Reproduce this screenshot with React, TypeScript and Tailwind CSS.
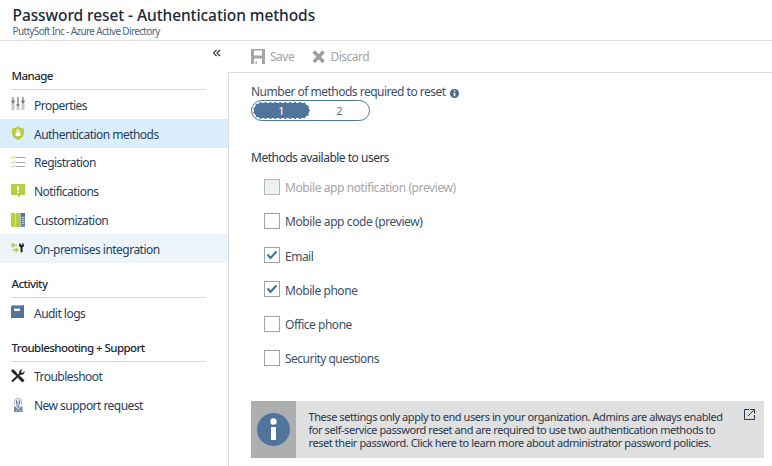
import React from "react";

const svg = { width: 14, height: 14, viewBox: "0 0 14 14" };

const Sliders = () => (
  <svg {...svg}>
    <path d="M1 0h2v13H1zM6 0h2v13H6zM11 0h2v13h-2z" fill="#a9acb0" />
    <path d="M0 7h4v6H0zM5 10h4v3H5zM10 7h4v6h-4z" fill="#dfe2e5" />
    <path d="M1 7h2v6H1zM6 10h2v3H6zM11 7h2v6h-2z" fill="#c6cacd" />
    <path d="M.5 3h3v3H.5zM5.500 7h3v2h-3zM10.500 3h3v3h-3z" fill="#83888f" />
  </svg>
);
const Shield = () => (
  <svg {...svg}>
    <path d="M1 2.500C4 2.500 5.500 1.200 7 0 8.500 1.200 10 2.500 13 2.500V7c0 3.500-2.500 5.500-6 7C3.500 12.500 1 10.500 1 7z" fill="#b5cf3f" />
    <path d="M4.700 6.200h4.600V10H4.700z" fill="#fff" />
    <path d="M5.700 6.500V5.200a1.300 1.300 0 0 1 2.600 0v1.300" fill="none" stroke="#fff" />
  </svg>
);
const Checklist = () => (
  <svg {...svg}>
    <path d="M4.500 2.500H14M4.500 7.500H14M4.500 11.500H14" stroke="#a5a8aa" />
    <path d="M.3 2.300l1.200 1.200L4 1M.3 7l1.200 1.200L4 5.700M.3 11.300l1.200 1.200L4 10" fill="none" stroke="#b5cf3f" />
  </svg>
);
const Bubble = () => (
  <svg {...svg}>
    <path d="M0 0h14v11H9.500L8 13.500 6 11H0z" fill="#b5cf3f" />
    <path d="M6 2h2v4.500H6zM6 7.700h2v1.600H6z" fill="#fff" />
  </svg>
);
const Columns = () => (
  <svg {...svg}>
    <path d="M0 0h4v14H0zM5 0h4v14H5z" fill="#b5cf3f" />
    <path d="M4 1h1v13H4z" fill="#d3dba8" />
    <path d="M9 0h1v14H9z" fill="#b8bdc3" />
    <path d="M10 0h4v14h-4z" fill="#7189a8" />
    <path d="M10 0h4v3h-4z" fill="#50759d" />
    <path d="M11 4.500h2M11 6.500h2M11 8.500h2M11 10.500h2" stroke="#b9c8d8" />
  </svg>
);
const Premises = () => (
  <svg {...svg}>
    <path d="M.5 4.300H6M2.800 2L.7 4.300l2.100 2.200M1.500 9H7M4.700 6.700L6.900 9l-2.200 2.300" fill="none" stroke="#b5cf3f" strokeWidth="1.400" />
    <path d="M8 4.300c0-1.200.8-2 1.700-2.200V4h1.600V2.100c1 .2 1.700 1 1.700 2.200 0 1-.6 1.700-1.500 2v5h-2v-5c-.9-.3-1.500-1-1.500-2z" fill="#1f2022" />
  </svg>
);
const Book = () => (
  <svg {...svg}>
    <path d="M1.500 0H13v13H0V1.500z" fill="#50759d" />
    <path d="M1.500.5H12" stroke="#9aafc8" />
    <path d="M3 3.500h6V6H3z" fill="#fff" />
  </svg>
);
const Tools = () => (
  <svg {...svg}>
    <path d="M1 1l4 4" stroke="#1f2022" strokeWidth="2.800" />
    <path d="M4.500 4.500l4 4M1 12.500L9.500 4.500" stroke="#1f2022" strokeWidth="1.900" />
    <path d="M8.300 8.300l4.200 4.200" stroke="#1f2022" strokeWidth="3" />
    <path d="M11.800.5L10 2.300l.3 1.300 1.300.3L13.500 2c.5 2.200-1.200 4-3.500 3.700L8.200 4C7.800 1.800 9.500.1 11.800.5z" fill="#1f2022" />
  </svg>
);
const Support = () => (
  <svg {...svg}>
    <path d="M3.500 6.500V4a3.500 3.500 0 0 1 7 0v2.500" fill="none" stroke="#9aa7b5" />
    <path d="M5 2.500h4v4.200H5z" fill="#c3d2e0" />
    <path d="M5.500 2.500v3.500M8.500 2.500v3.500M5.500 7.300h3" stroke="#50759d" />
    <path d="M3 8.500h8.500V14H3z" fill="#6a88a8" />
    <path d="M4.500 8.500L7.200 11 10 8.500M5 12.500h1M8.500 12.500h1" fill="none" stroke="#e8eef4" />
  </svg>
);

type Item = { icon: React.ReactNode; label: string; row?: string };

const manage: Item[] = [
  { icon: <Sliders />, label: "Properties" },
  { icon: <Shield />, label: "Authentication methods", row: "bg-[#daeefd]" },
  { icon: <Checklist />, label: "Registration" },
  { icon: <Bubble />, label: "Notifications" },
  { icon: <Columns />, label: "Customization" },
  { icon: <Premises />, label: "On-premises integration", row: "bg-[#edf5fa]" },
];
const activity: Item[] = [{ icon: <Book />, label: "Audit logs" }];
const support: Item[] = [
  { icon: <Tools />, label: "Troubleshoot" },
  { icon: <Support />, label: "New support request" },
];

function Section({ title, items }: { title: string; items: Item[] }) {
  return (
    <section>
      <h2 className="mr-[22px] ml-[11px] flex h-[27px] items-center border-b border-[#d5d9dd] pl-[0.5px] text-[11.5px] font-medium tracking-[-0.55px] text-[#1b2733]">
        {title}
      </h2>
      <ul>
        {items.map((it) => (
          <li key={it.label} className={`flex h-[28.8px] items-center pl-[11px] ${it.row ?? ""}`}>
            <span className="w-[23px] shrink-0">{it.icon}</span>
            <span className="pt-[2.8px] text-[12px] tracking-[-0.53px] text-[#27405c]">{it.label}</span>
          </li>
        ))}
      </ul>
    </section>
  );
}

const methods = [
  { label: "Mobile app notification (preview)", disabled: true, cls: "tracking-[-0.41px]" },
  { label: "Mobile app code (preview)", cls: "tracking-[-0.4px]" },
  { label: "Email", checked: true, cls: "tracking-[-0.5px]" },
  { label: "Mobile phone", checked: true, cls: "tracking-[-0.45px]" },
  { label: "Office phone", cls: "tracking-[-0.48px]" },
  { label: "Security questions", cls: "tracking-[-0.52px]" },
];

const notice = [
  "These settings only apply to end users in your organization. Admins are always enabled",
  "for self-service password reset and are required to use two authentication methods to",
  "reset their password. Click here to learn more about administrator password policies.",
];

export default function App() {
  return (
    <div className="flex h-[466px] w-[772px] flex-col overflow-hidden bg-white font-['Noto_Sans',sans-serif] leading-none whitespace-nowrap">
      <header className="h-[41px] shrink-0 border-b border-[#dcdfe1] pt-[6px] pl-[12.5px]">
        <h1 className="text-[15.5px] leading-[18px] font-medium tracking-[-0.08px] text-[#1c2a38]">Password reset - Authentication methods</h1>
        <p className="text-[10px] leading-[14px] tracking-[-0.65px] text-[#50657f]">PuttySoft Inc - Azure Active Directory</p>
      </header>
      <div className="flex min-h-0 flex-1">
        <nav className="flex w-[228px] shrink-0 flex-col">
          <div className="flex h-[22px] justify-end pt-[8px] pr-[7px]">
            <svg width="9" height="8" viewBox="0 0 9 8" fill="none" stroke="#26313e" strokeWidth="1.100">
              <path d="M4.500 1L1.500 4l3 3M8 1L5 4l3 3" />
            </svg>
          </div>
          <Section title="Manage" items={manage} />
          <div className="h-[8px]" />
          <Section title="Activity" items={activity} />
          <div className="h-[8px]" />
          <Section title="Troubleshooting + Support" items={support} />
        </nav>
        <main className="flex flex-1 flex-col">
          <div className="flex h-[31px] shrink-0 items-center pl-[23px] text-[12px] tracking-[-0.5px] text-[#a0a2a5]">
            <svg width="14" height="15" viewBox="0 0 14 15" className="mr-[5px]">
              <path d="M0 0h14v15H0zM3 1.500v5h8v-5zM3 9.500V15h1.500v-2.500H6V15h5V9.500z" fill="#a3a5a8" fillRule="evenodd" />
            </svg>
            <span className="w-[42px] pt-[1px]">Save</span>
            <svg width="14" height="14" viewBox="0 0 14 14" className="mr-[4.500px]">
              <path d="M1.800 1.500l9.800 10.500M11.600 1.500L1.800 12" stroke="#9c9ea1" strokeWidth="3.400" />
            </svg>
            <span className="pt-[1px]">Discard</span>
          </div>
          <div className="flex flex-1 flex-col border-t border-l border-[#d9dcdf] pt-[11px] pl-[22px]">
            <div className="flex h-[16px] items-center text-[12px] tracking-[-0.5px] text-[#3d5069]">
              <span>Number of methods required to reset</span>
              <svg width="9" height="9" viewBox="0 0 9 9" className="mt-[3px] ml-[4.500px]">
                <circle cx="4.500" cy="4.500" r="4.500" fill="#48698f" />
                <path d="M3.800 1.500h1.500v1.300H3.800zM3.500 3.700h1.800v3.500H3.800z" fill="#fff" />
              </svg>
            </div>
            <div className="flex h-[21px] w-[119px] items-center rounded-full border border-[#50759d] pl-px text-[11px] text-[#50759d]">
              <span className="flex h-[17px] w-[57px] items-center justify-center rounded-full border border-dashed border-white bg-[#50759d] text-white">1</span>
              <span className="flex flex-1 justify-center">2</span>
            </div>
            <h2 className="mt-[29px] flex h-[16px] items-center text-[12px] tracking-[-0.5px] text-[#26384d]">Methods available to users</h2>
            <div className="mt-[3.5px] flex flex-col pl-[13px]">
              {methods.map((m) => (
                <label key={m.label} className="flex h-[34.25px] items-center">
                  <span
                    className={`mr-[5px] flex size-[16px] items-center justify-center border ${
                      m.disabled ? "border-[#b3b6b8] bg-[#ecf1f4]" : "border-[#a0a3a6] bg-white"
                    }`}
                  >
                    {m.checked && (
                      <svg width="12" height="10" viewBox="0 0 12 10">
                        <path d="M1.500 4.500l3 3.500 6-6.500" fill="none" stroke="#3f6c9b" strokeWidth="2" />
                      </svg>
                    )}
                  </span>
                  <span className={`pt-[3px] text-[12px] ${m.cls} ${m.disabled ? "text-[#a3a6a9]" : "text-[#3d5069]"}`}>{m.label}</span>
                </label>
              ))}
            </div>
            <aside className="mt-[26px] flex h-[57px] w-[513px] bg-[#e0e0e0]">
              <div className="flex w-[45px] shrink-0 items-center justify-center bg-[#adaeaf]">
                <svg width="33" height="33" viewBox="0 0 33 33">
                  <circle cx="16.500" cy="16.500" r="16.500" fill="#50759d" />
                  <circle cx="16.500" cy="8.500" r="3.200" fill="#fff" />
                  <path d="M14 14h5v13h-5z" fill="#fff" />
                </svg>
              </div>
              <div className="w-[437px] shrink-0 pt-[9px] pl-[12.500px] text-[11px] leading-[13px] tracking-[-0.43px] text-[#27384b]">
                {notice.map((line) => (
                  <p key={line}>{line}</p>
                ))}
              </div>
              <svg width="11" height="11" viewBox="0 0 11 11" className="mt-[8px] ml-[11px]" fill="none" stroke="#27384b">
                <path d="M5 .5H.5v10h10V6M6.500.5h4v4M10.500.5L4 7" />
              </svg>
            </aside>
          </div>
        </main>
      </div>
    </div>
  );
}
